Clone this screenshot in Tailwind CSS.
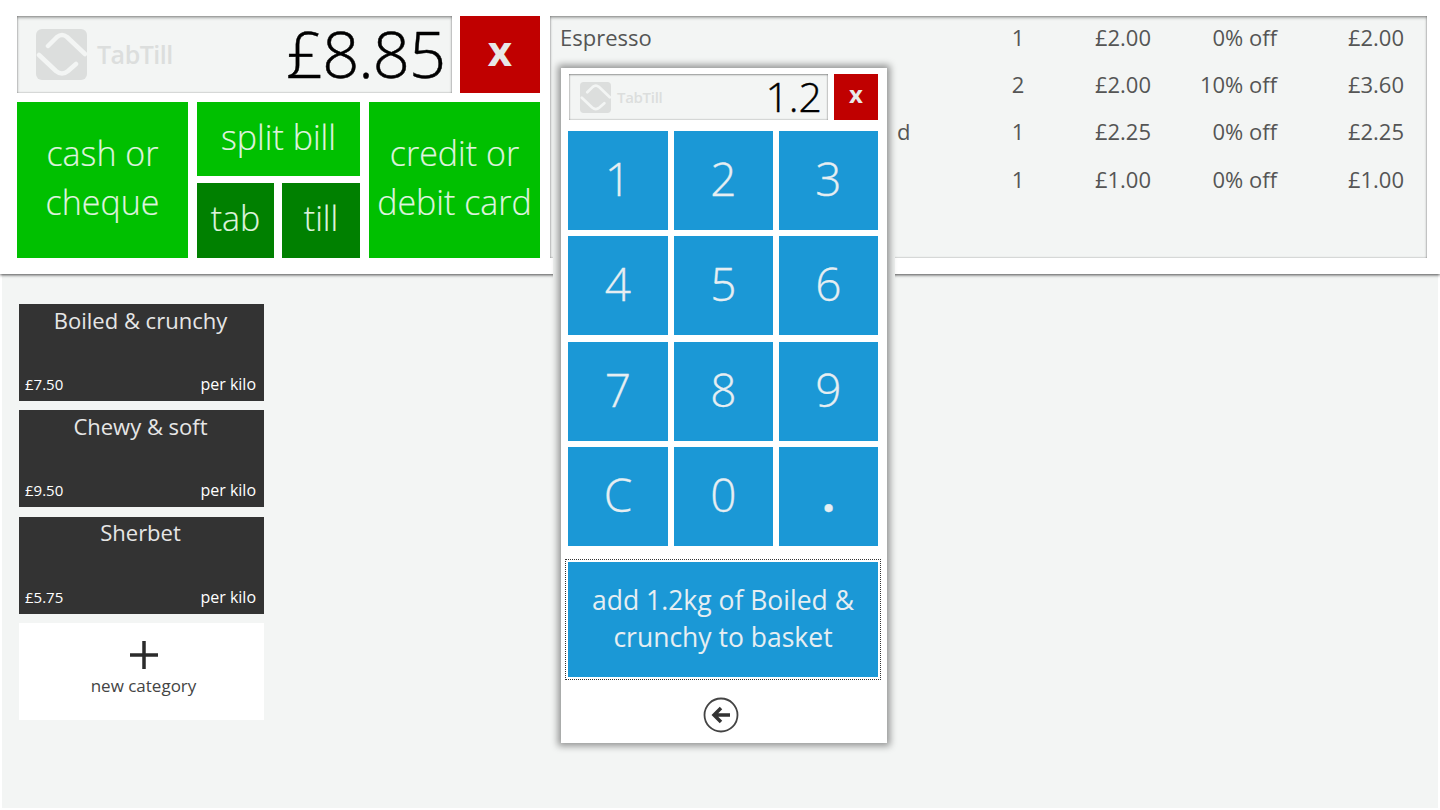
<!DOCTYPE html>
<html lang="en">
<head>
  <meta charset="UTF-8" />
  <title>TabTill</title>
  <script src="https://cdn.jsdelivr.net/npm/@tailwindcss/browser@4"></script>
</head>
<body class="bg-white font-['Open_Sans','Noto_Sans',sans-serif] overflow-hidden">
  <div class="relative w-[1440px] h-[810px] overflow-hidden">
    <header class="relative z-10 h-[274px] bg-white shadow-[0_1px_3px_rgba(0,0,0,0.7)] flex gap-[10px] pl-[17px] pr-[13px] pt-[16px]">
      <section class="w-[523px] flex flex-col gap-[9px]">
        <div class="flex gap-[8px] h-[77px]">
          <div class="w-[435px] bg-[#f3f5f4] shadow-[inset_0_2px_3px_rgba(0,0,0,0.3),inset_0_0_2px_rgba(0,0,0,0.4)] flex items-center justify-between pl-[19px] pr-[7px]">
            <div class="flex items-center gap-[10px]">
              <svg width="51" height="51" viewBox="0 0 51 51">
                <rect width="51" height="51" rx="6" fill="#dcdedd"/>
                <path d="M3 26 L20 42 Q26 47 32 42 L40 35 M49 25 L31 8 Q26 4 21 8 L12 17" fill="none" stroke="#f3f5f4" stroke-width="4.500" stroke-linecap="round" stroke-linejoin="round"/>
              </svg>
              <span class="text-[25px] font-semibold text-[#dcdedd] tracking-[-0.5px]">TabTill</span>
            </div>
            <span class="text-[65px] font-light text-black leading-none tracking-[-1px] [-webkit-text-stroke:0.5px] pb-[2px]">£8.85</span>
          </div>
          <button class="w-[80px] bg-[#c00000] text-[#e8e8e8] text-[42px] font-bold leading-none pb-[10px]">x</button>
        </div>
        <div class="flex gap-[9px] h-[156px] text-[#dff3df] font-light [-webkit-text-stroke:0.2px]">
          <button class="w-[171px] bg-[#00c000] text-[34px] leading-[49px] pb-[4px]">cash or<br>cheque</button>
          <div class="w-[163px] flex flex-col gap-[7px]">
            <button class="h-[74px] bg-[#00c000] text-[34px] pb-[4px]">split bill</button>
            <div class="flex-1 flex gap-[8px]">
              <button class="w-[77px] bg-[#008000] text-[34px] pb-[4px]">tab</button>
              <button class="w-[78px] bg-[#008000] text-[34px] pb-[4px]">till</button>
            </div>
          </div>
          <button class="w-[171px] bg-[#00c000] text-[34px] leading-[49px] whitespace-nowrap pb-[4px]">credit or<br>debit card</button>
        </div>
      </section>
      <section class="w-[877px] h-[242px] bg-[#f3f5f4] shadow-[inset_0_2px_3px_rgba(0,0,0,0.3),inset_0_0_2px_rgba(0,0,0,0.4)] pl-[10px] pr-[23px] text-[22px] text-[#555]">
        <div class="grid grid-cols-[1fr_40px_113px_126px_127px] items-center h-[47px] mt-[-2px]"><span>Espresso</span><span class="text-center">1</span><span class="text-right">£2.00</span><span class="text-right">0% off</span><span class="text-right">£2.00</span></div>
        <div class="grid grid-cols-[1fr_40px_113px_126px_127px] items-center h-[47px]"><span></span><span class="text-center">2</span><span class="text-right">£2.00</span><span class="text-right">10% off</span><span class="text-right">£3.60</span></div>
        <div class="grid grid-cols-[1fr_40px_113px_126px_127px] items-center h-[47px]"><span class="pl-[337px]">d</span><span class="text-center">1</span><span class="text-right">£2.25</span><span class="text-right">0% off</span><span class="text-right">£2.25</span></div>
        <div class="grid grid-cols-[1fr_40px_113px_126px_127px] items-center h-[47px] pt-[1px]"><span></span><span class="text-center">1</span><span class="text-right">£1.00</span><span class="text-right">0% off</span><span class="text-right">£1.00</span></div>
      </section>
    </header>

    <main class="h-[534px] mx-[2px] bg-[#f3f5f4] pl-[17px] pt-[30px] flex flex-col gap-[9.330px] w-[1436px]">
      <div class="w-[245px] h-[97px] bg-[#333] text-[#e6e6e6] flex flex-col justify-between pl-[6px] pr-[8px] pb-[5px]">
        <p class="text-center text-[22px] leading-[32px]">Boiled &amp; crunchy</p>
        <p class="flex justify-between items-baseline text-[15px] text-white"><span>£7.50</span><span class="text-[16px]">per kilo</span></p>
      </div>
      <div class="w-[245px] h-[97px] bg-[#333] text-[#e6e6e6] flex flex-col justify-between pl-[6px] pr-[8px] pb-[5px]">
        <p class="text-center text-[22px] leading-[32px]">Chewy &amp; soft</p>
        <p class="flex justify-between items-baseline text-[15px] text-white"><span>£9.50</span><span class="text-[16px]">per kilo</span></p>
      </div>
      <div class="w-[245px] h-[97px] bg-[#333] text-[#e6e6e6] flex flex-col justify-between pl-[6px] pr-[8px] pb-[5px]">
        <p class="text-center text-[22px] leading-[31px]">Sherbet</p>
        <p class="flex justify-between items-baseline text-[15px] text-white"><span>£5.75</span><span class="text-[16px]">per kilo</span></p>
      </div>
      <div class="w-[245px] h-[97px] bg-white flex flex-col items-center pt-[17px] pl-[4px] text-[#444]">
        <svg width="30" height="30" viewBox="0 0 30 30"><path d="M15 1V29M1 15H29" stroke="#2b2b2b" stroke-width="3.500"/></svg>
        <p class="text-[17px] leading-[22px] mt-[5px]">new category</p>
      </div>
    </main>

    <div class="absolute z-20 left-[553px] top-[60px] w-[342px] h-[690px] bg-[#f3f5f4] p-[8px] pb-[7px]">
      <div class="h-full bg-white shadow-[0_0_7px_3px_rgba(0,0,0,0.4)] pt-[6px] pl-[7px] pr-[9px] flex flex-col">
        <div class="flex gap-[6px] h-[46px] ml-[1px]">
          <div class="w-[259px] bg-[#f3f5f4] shadow-[inset_0_1px_2px_rgba(0,0,0,0.3),inset_0_0_2px_rgba(0,0,0,0.4)] flex items-center justify-between pl-[11px] pr-[6px]">
            <div class="flex items-center gap-[6px]">
              <svg width="31" height="31" viewBox="0 0 51 51">
                <rect width="51" height="51" rx="6" fill="#dcdedd"/>
                <path d="M3 26 L20 42 Q26 47 32 42 L40 35 M49 25 L31 8 Q26 4 21 8 L12 17" fill="none" stroke="#f3f5f4" stroke-width="4.500" stroke-linecap="round" stroke-linejoin="round"/>
              </svg>
              <span class="text-[15px] font-semibold text-[#dcdedd] tracking-[-0.3px]">TabTill</span>
            </div>
            <span class="text-[41px] font-light text-black leading-none [-webkit-text-stroke:0.4px] pb-[1px]">1.2</span>
          </div>
          <button class="w-[44px] bg-[#c00000] text-[#e8e8e8] text-[24px] font-bold leading-none pb-[7px]">x</button>
        </div>
        <div class="grid grid-cols-[100px_99px_99px] gap-x-[6px] gap-y-[6.330px] mt-[11px] text-[46px] font-light text-[#e6eef2] [-webkit-text-stroke:0.3px]">
          <button class="h-[99px] bg-[#1b98d6] pb-[4px]">1</button>
          <button class="h-[99px] bg-[#1b98d6] pb-[4px]">2</button>
          <button class="h-[99px] bg-[#1b98d6] pb-[4px]">3</button>
          <button class="h-[99px] bg-[#1b98d6] pb-[4px]">4</button>
          <button class="h-[99px] bg-[#1b98d6] pb-[4px]">5</button>
          <button class="h-[99px] bg-[#1b98d6] pb-[4px]">6</button>
          <button class="h-[99px] bg-[#1b98d6] pb-[4px]">7</button>
          <button class="h-[99px] bg-[#1b98d6] pb-[4px]">8</button>
          <button class="h-[99px] bg-[#1b98d6] pb-[4px]">9</button>
          <button class="h-[99px] bg-[#1b98d6] pb-[4px]">C</button>
          <button class="h-[99px] bg-[#1b98d6] pb-[4px]">0</button>
          <button class="h-[99px] bg-[#1b98d6] pb-[4px] font-bold">.</button>
        </div>
        <div class="mt-[13px] -mx-[3px] border border-dotted border-[#333] p-[2px]">
          <button class="w-full h-[115px] bg-[#1b98d6] text-[26.500px] leading-[37px] text-[#e6eef2]">add 1.2kg of Boiled &amp;<br>crunchy to basket</button>
        </div>
        <svg class="mt-[17px] ml-[135px]" width="36" height="36" viewBox="0 0 36 36">
          <circle cx="18" cy="18" r="16.500" fill="none" stroke="#444" stroke-width="1.800"/>
          <path d="M27 18H11M18 11l-7 7 7 7" fill="none" stroke="#333" stroke-width="3.500"/>
        </svg>
      </div>
    </div>
  </div>
</body>
</html>
